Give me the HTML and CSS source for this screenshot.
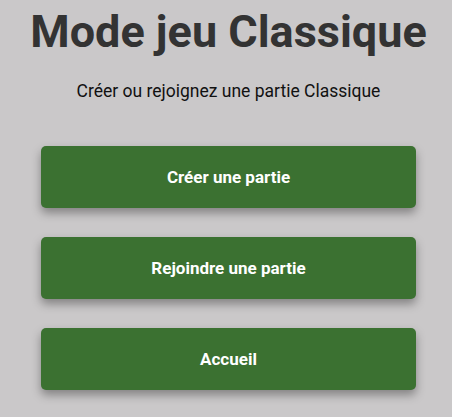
FILE: index.html
```html
<!DOCTYPE html>
<html lang="fr">
<head>
<meta charset="utf-8">
<link rel="stylesheet" href="styles.css">
</head>
<body>
<main class="page">
  <h1 class="title">Mode jeu Classique</h1>
  <p class="subtitle">Créer ou rejoignez une partie Classique</p>
  <div class="actions">
    <button class="btn">Créer une partie</button>
    <button class="btn">Rejoindre une partie</button>
    <button class="btn">Accueil</button>
  </div>
</main>
</body>
</html>
```
FILE: styles.css
```css
html, body {
  margin: 0;
  padding: 0;
  background: #cac8c9;
  height: 100%;
}
.page {
  font-family: Roboto, "Liberation Sans", sans-serif;
  display: flex;
  flex-direction: column;
  align-items: center;
  padding: 5px 0 0 5px;
}
.title {
  margin: 0;
  font-size: 45px;
  font-weight: 700;
  color: #333333;
  line-height: 54px;
}
.subtitle {
  margin: 20px 0 0;
  font-size: 17.5px;
  color: #111;
  line-height: 24px;
}
.actions {
  margin-top: 43px;
  display: flex;
  flex-direction: column;
  gap: 29px;
}
.btn {
  width: 375px;
  height: 62px;
  border: none;
  border-radius: 5px;
  background: #3b7131;
  color: #fff;
  font-family: Roboto, "Liberation Sans", sans-serif;
  font-weight: 700;
  font-size: 17px;
  box-shadow: 0 5px 10px rgba(0,0,0,0.35);
  cursor: pointer;
}
```
